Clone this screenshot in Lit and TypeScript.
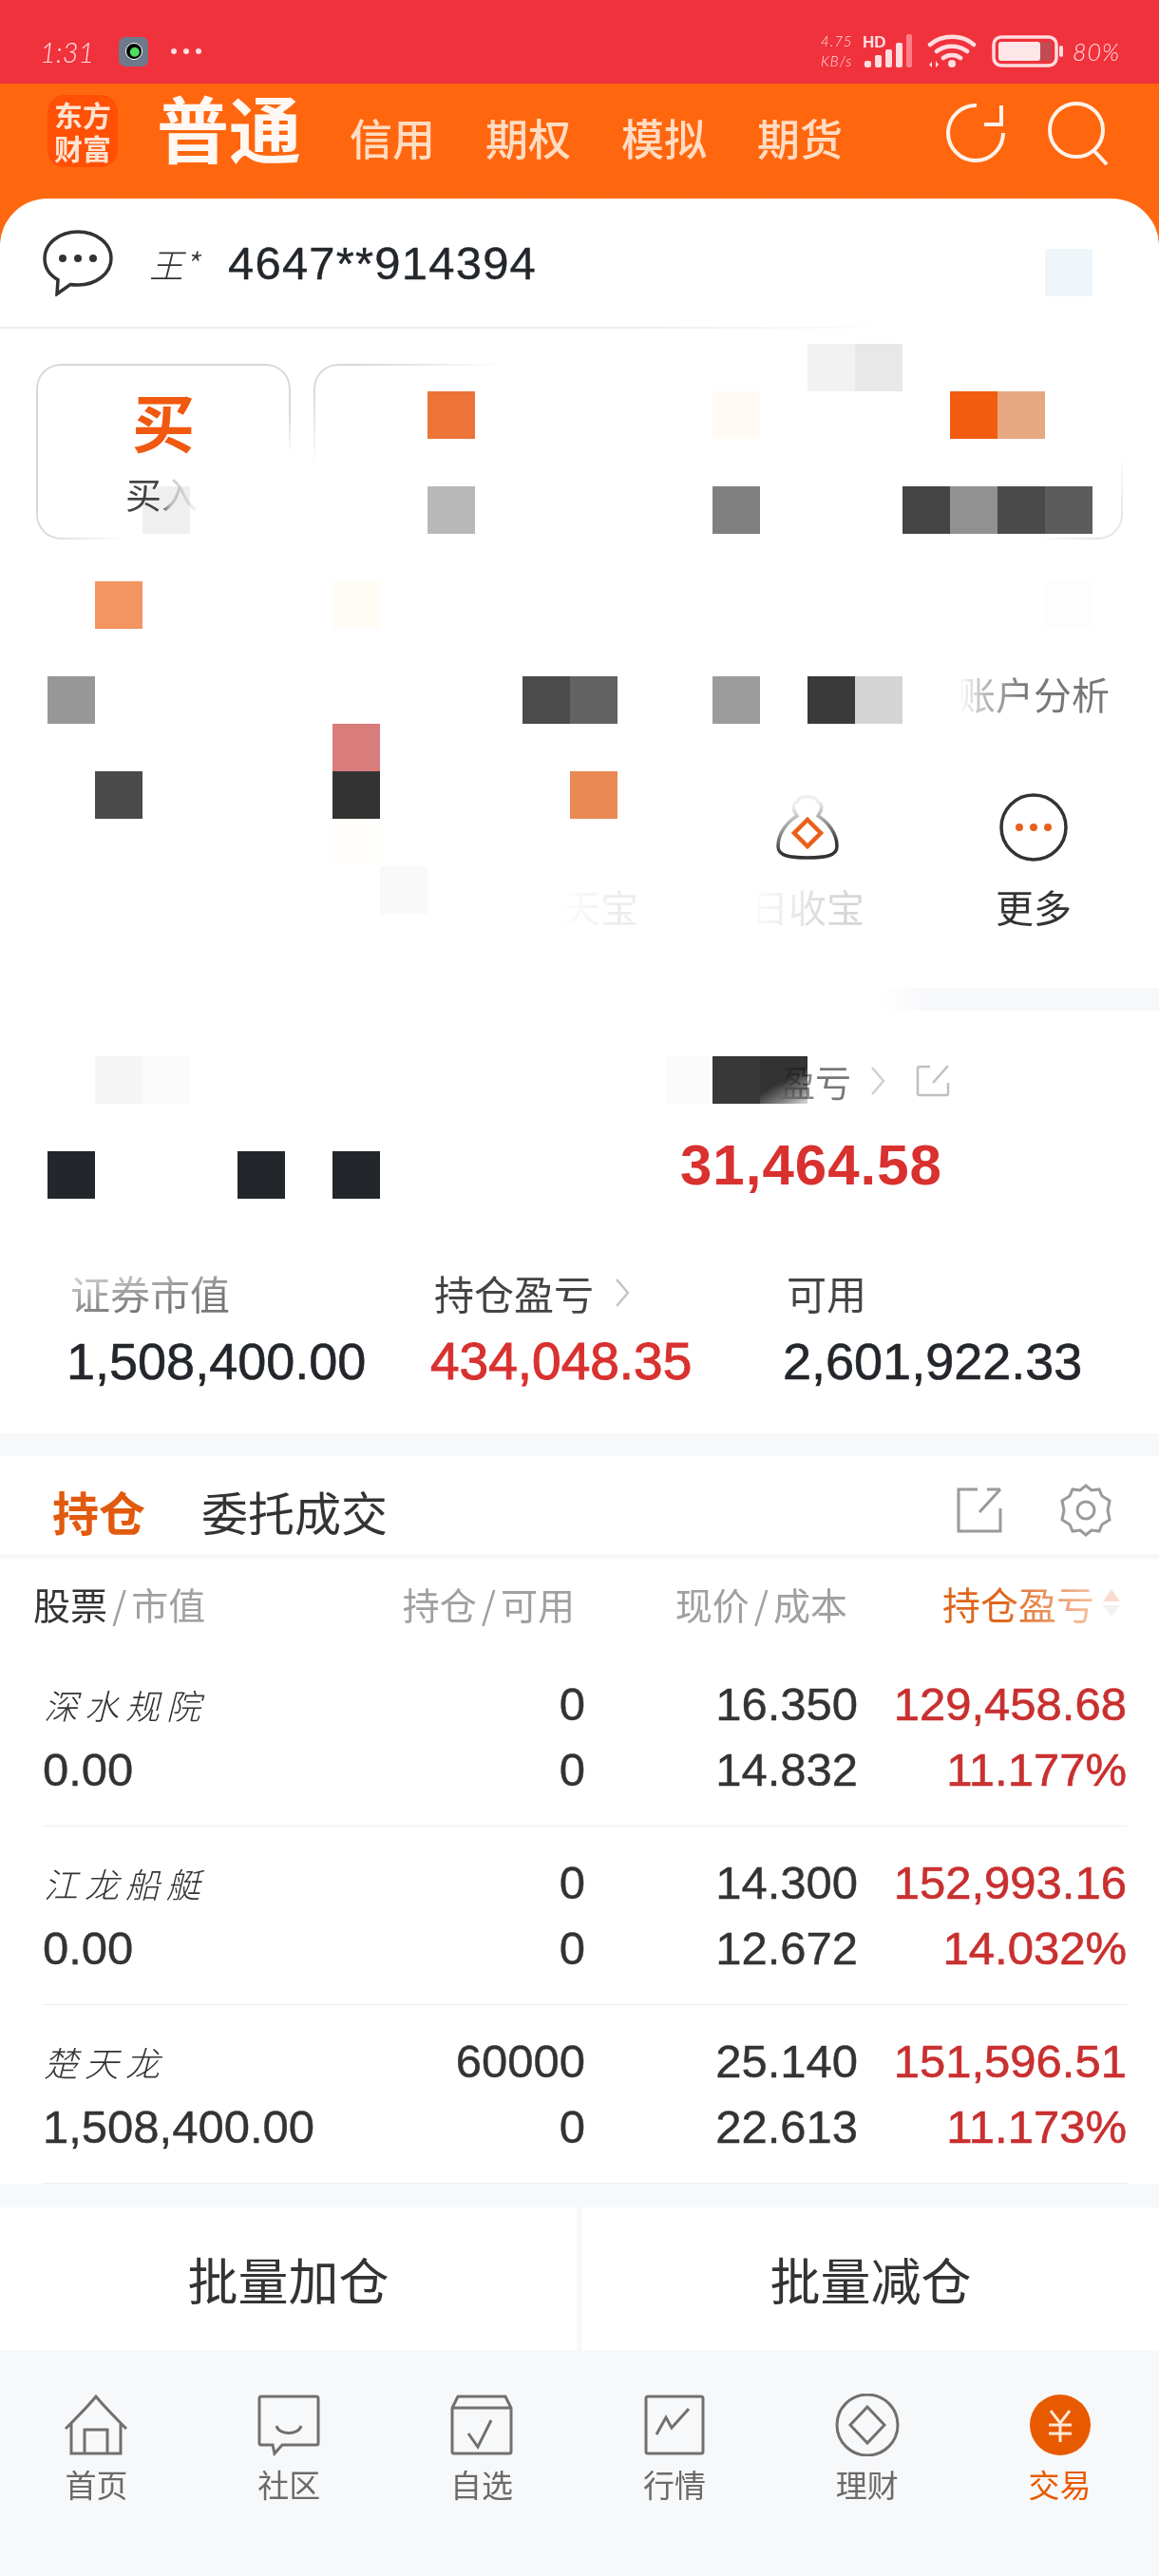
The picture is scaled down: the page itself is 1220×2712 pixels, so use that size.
import { LitElement, html, css, svg } from 'lit';
import { customElement } from 'lit/decorators.js';

// pixelated patches that sit over the page, x / y / colour on a 50px grid
const TILES: [number, number, string][] = [
  [1100, 262, '#eff6fa'],
  [850, 362, '#f2f2f2'], [900, 362, '#e8e8e8'],
  [450, 412, '#ec7438'], [750, 412, '#fffaf3'], [1000, 412, '#f25c10'], [1050, 412, '#e6a880'],
  [150, 512, '#efefef'], [450, 512, '#b8b8b8'], [750, 512, '#808080'],
  [950, 512, '#444444'], [1000, 512, '#919191'], [1050, 512, '#4a4a4a'], [1100, 512, '#5c5c5c'],
  [100, 612, '#f29560'], [350, 612, '#fffbf5'], [1100, 612, '#fdfdfd'],
  [50, 712, '#979797'], [550, 712, '#4b4b4b'], [600, 712, '#626262'],
  [750, 712, '#9c9c9c'], [850, 712, '#3a3a3a'], [900, 712, '#d4d4d4'],
  [350, 762, '#d87c7c'],
  [100, 812, '#4a4a4a'], [350, 812, '#333333'], [600, 812, '#e98a55'],
  [350, 862, '#fffefb'], [400, 912, '#f9f9f9'],
  [100, 1112, '#f5f5f5'], [150, 1112, '#fbfbfb'], [700, 1112, '#fbfbfb'], [750, 1112, '#383838'],
  [800, 1112, 'linear-gradient(150deg,#333 50%,#8a8a8a 80%,#ddd 100%)'],
  [50, 1212, '#23272b'], [250, 1212, '#23272b'], [350, 1212, '#23272b'],
];

const ROWS = [
  { name: '深水规院', value: '0.00', hold: '0', avail: '0', price: '16.350', cost: '14.832', pl: '129,458.68', pct: '11.177%' },
  { name: '江龙船艇', value: '0.00', hold: '0', avail: '0', price: '14.300', cost: '12.672', pl: '152,993.16', pct: '14.032%' },
  { name: '楚天龙', value: '1,508,400.00', hold: '60000', avail: '0', price: '25.140', cost: '22.613', pl: '151,596.51', pct: '11.173%' },
];

const NAV = [
  { label: '首页', icon: svg`<path d="M3 37C12 28 26 14 35 3c9 11 23 25 32 34M9 31v32h52V31M23 63V38h24v25"/>` },
  { label: '社区', icon: svg`<path d="M6 3h58a2 2 0 0 1 2 2v47a2 2 0 0 1-2 2H28l-8 9-2-9H6a2 2 0 0 1-2-2V5a2 2 0 0 1 2-2z"/><path d="M22 34c3 10 23 10 26 0"/>` },
  { label: '自选', icon: svg`<path d="M10 3h50l6 12v46a2 2 0 0 1-2 2H6a2 2 0 0 1-2-2V15zM4 15h62"/><path d="M21 42l10 14 14-28"/>` },
  { label: '行情', icon: svg`<path d="M7 3h56a2 2 0 0 1 2 2v56a2 2 0 0 1-2 2H7a2 2 0 0 1-2-2V5a2 2 0 0 1 2-2z"/><path d="M16 43l10-18 6 11 18-20"/>` },
  { label: '理财', icon: svg`<circle cx="35" cy="33" r="32"/><path d="M35 14l18 19-18 19-18-19z"/>` },
];

@customElement('app-root')
export class AppRoot extends LitElement {
  static styles = css`
    :host {
      display: block;
      position: relative;
      width: 1220px;
      height: 2712px;
      overflow: hidden;
      background: #f7f8fa;
      color: #333;
      font-family: 'Noto Sans CJK SC', 'Liberation Sans', sans-serif;
    }
    .num {
      font-family: 'Liberation Sans', sans-serif;
    }
    svg {
      display: block;
      fill: none;
    }

    .status {
      height: 88px;
      background: #f0323c;
      color: #ffdde0;
      display: flex;
      align-items: center;
      padding: 20px 45px 0;
      box-sizing: border-box;
    }
    .time {
      font: italic 300 29px Lato, sans-serif;
      margin-left: -3px;
      width: 83px;
    }
    .notify {
      width: 31px;
      height: 31px;
      border-radius: 7px;
      background: #6c7a8c;
      display: grid;
      place-items: center;
    }
    .notify i {
      width: 16px;
      height: 16px;
      border-radius: 50%;
      background: radial-gradient(circle at 55% 55%, #4fdc5c 35%, #000 45%);
      border: 1px solid #fff;
    }
    .dots {
      display: flex;
      gap: 7px;
      margin-left: 24px;
    }
    .dots i {
      width: 6px;
      height: 6px;
      border-radius: 50%;
      background: #ffdde0;
    }
    .status-right {
      margin-left: auto;
      display: flex;
      align-items: center;
    }
    .speed {
      font: italic 300 15px/21px Lato, sans-serif;
      letter-spacing: 1px;
      width: 44px;
    }
    .batt-text {
      font: italic 300 25px Lato, sans-serif;
      letter-spacing: 1px;
      margin-left: 9px;
      width: 46px;
    }

    .header {
      height: 121px;
      padding: 12px 0 0 50px;
      box-sizing: border-box;
      display: flex;
      align-items: flex-start;
    }
    .top {
      background: linear-gradient(#ff660e, #ff6f1a);
    }
    .logo {
      width: 74px;
      height: 76px;
      border-radius: 18px;
      background: #ff5005;
      color: #ffe3d2;
      font-size: 30px;
      font-weight: 700;
      line-height: 35px;
      text-align: center;
      display: flex;
      align-items: center;
      justify-content: center;
    }
    .title {
      font-size: 76px;
      font-weight: 700;
      line-height: 76px;
      color: #fff8f2;
      margin: -5px 0 0 41px;
      width: 203px;
    }
    .kinds {
      display: flex;
      gap: 53px;
      padding-top: 15px;
      font-size: 45px;
      line-height: 60px;
      font-weight: 500;
      color: #ffdcc2;
    }
    .head-icons {
      margin-left: auto;
      display: flex;
      gap: 41px;
      padding: 6px 53px 0 0;
      stroke: #fff3ea;
    }

    .card {
      background: #fff;
      border-radius: 50px 50px 0 0;
    }
    .account {
      height: 135px;
      padding-left: 45px;
      display: flex;
      align-items: center;
    }
    .owner {
      font-size: 36px;
      font-style: italic;
      font-weight: 300;
      margin-left: 38px;
      width: 83px;
    }
    .acc-no {
      font-size: 49px;
      color: #23272b;
      letter-spacing: 1.2px;
      -webkit-text-stroke: 0.4px currentColor;
    }
    .rule {
      height: 2px;
      background: linear-gradient(90deg, #eee 55%, #fff 78%);
    }
    .trades {
      display: grid;
      grid-template-columns: repeat(4, 268px);
      gap: 24px;
      padding: 37px 0 0 38px;
    }
    .trade {
      height: 185px;
      position: relative;
      text-align: center;
      box-sizing: border-box;
    }
    .trade::before {
      content: '';
      position: absolute;
      inset: 0;
      border: 2px solid #d8d8d8;
      border-radius: 26px;
    }
    .trade.a::before {
      mask-image: linear-gradient(153deg, #000 58%, transparent 72%);
    }
    .trade.b::before {
      mask-image: linear-gradient(152deg, #000 8%, transparent 33%);
    }
    .trade.c::before {
      display: none;
    }
    .trade.d::before {
      border-color: #e6e6e6;
      mask-image: linear-gradient(135deg, transparent 80%, #000 94%);
    }
    .buy {
      font-size: 66px;
      font-weight: 700;
      color: #f0590f;
      line-height: 70px;
      padding-top: 24px;
    }
    .buy-sub {
      font-size: 38px;
      line-height: 46px;
      width: 80px;
      margin: 19px 0 0 94px;
      text-align: left;
      background: linear-gradient(90deg, #444 45%, #ccc 60%, #eee 90%);
      -webkit-background-clip: text;
      background-clip: text;
      color: transparent;
    }

    .funcs {
      display: grid;
      grid-template-columns: repeat(5, 238px);
      grid-template-rows: 224px 205px;
      padding: 43px 0 0 17px;
    }
    .func {
      text-align: center;
    }
    .func svg {
      margin: 0 auto;
    }
    .func .slot {
      height: 72px;
    }
    .func .lab {
      font-size: 40px;
      line-height: 50px;
      margin-top: 22px;
      white-space: nowrap;
    }
    .lab.acct {
      background: linear-gradient(90deg, #fff 17%, #bbb 28%, #777 45%);
    }
    .lab.tian {
      background: linear-gradient(90deg, #fff 40%, #ececec 65%, #f0f0f0);
    }
    .lab.shou {
      background: linear-gradient(100deg, #fff 25%, #d8d8d8 60%, #cfcfcf);
    }
    .lab.acct,
    .lab.tian,
    .lab.shou {
      -webkit-background-clip: text;
      background-clip: text;
      color: transparent;
    }
    .lab.more {
      color: #333;
    }
    .band {
      height: 24px;
      background: linear-gradient(90deg, #fff 76%, #f7f8fa 80%);
    }

    .totals {
      height: 445px;
      background: #fff;
      box-sizing: border-box;
      padding-top: 48px;
    }
    .total-top {
      display: flex;
      justify-content: flex-end;
      padding-right: 220px;
      align-items: center;
      height: 52px;
      gap: 16px;
    }
    .day-label {
      font-size: 38px;
      line-height: 52px;
      background: linear-gradient(90deg, #fff 35%, #777 70%);
      -webkit-background-clip: text;
      background-clip: text;
      color: transparent;
      width: 126px;
      margin-right: 4px;
      text-align: right;
    }
    .total-top .share {
      margin-left: 16px;
    }
    .big {
      margin: 27px 0 0 716px;
      font-size: 60px;
      line-height: 72px;
      font-weight: 700;
      color: #d8312f;
      letter-spacing: 1px;
    }
    .stats {
      display: grid;
      grid-template-columns: 383px 371px 1fr;
      padding: 73px 0 0 70px;
    }
    .stat-label {
      font-size: 42px;
      line-height: 50px;
      color: #444;
      padding-left: 4px;
      display: flex;
      align-items: center;
      gap: 22px;
    }
    .stat-label.wash span {
      background: linear-gradient(170deg, #ddd 5%, #777 70%);
      -webkit-background-clip: text;
      background-clip: text;
      color: transparent;
    }
    .stat-value {
      font-size: 54px;
      line-height: 60px;
      color: #23272b;
      margin-top: 17px;
      -webkit-text-stroke: 0.6px currentColor;
    }
    .stat-value.red {
      color: #d8312f;
      font-size: 55px;
      -webkit-text-stroke: 1px currentColor;
    }

    .tabs {
      margin-top: 24px;
      height: 103px;
      box-sizing: border-box;
      background: #fff;
      display: flex;
      align-items: center;
      padding: 11px 48px 0 55px;
      font-size: 49px;
    }
    .tab-on {
      color: #e25a0e;
      font-weight: 700;
      width: 157px;
    }
    .tab-icons {
      margin-left: auto;
      display: flex;
      align-items: center;
      gap: 59px;
      stroke: #9a9a9a;
    }
    .table {
      background: #fff;
      border-top: 5px solid #f5f6f8;
    }
    .cols {
      display: grid;
      grid-template-columns: 300px 271px 287px 283px;
      padding: 0 34px 0 45px;
    }
    .thead {
      height: 94px;
      align-items: center;
      font-size: 39px;
      color: #a0a0a0;
      text-align: right;
    }
    .thead > div {
      padding-right: 11px;
      white-space: nowrap;
    }
    .thead .first {
      text-align: left;
      margin-left: -10px;
    }
    .thead b {
      font-weight: 400;
      color: #333;
    }
    .thead i {
      font-style: normal;
      margin: 0 5px;
    }
    .thead .sort {
      display: flex;
      justify-content: flex-end;
      align-items: center;
      gap: 8px;
      padding-right: 6px;
    }
    .sort span {
      font-size: 40px;
      background: linear-gradient(90deg, #e0661c 40%, #f3c3a5 100%);
      -webkit-background-clip: text;
      background-clip: text;
      color: transparent;
    }
    .row {
      height: 187px;
      border-bottom: 1px solid #eee;
      margin: 0 33px 0 45px;
      padding: 0;
      grid-template-rows: 69px 69px;
      align-content: center;
      font-size: 49px;
      line-height: 69px;
      text-align: right;
      color: #333;
      -webkit-text-stroke: 0.4px currentColor;
    }
    .row .name {
      font-size: 36px;
      font-style: italic;
      font-weight: 300;
      letter-spacing: 7px;
      text-align: left;
      font-family: 'Noto Sans CJK SC', sans-serif;
      padding-left: 1px;
      -webkit-text-stroke: 0;
    }
    .row .left {
      text-align: left;
    }
    .row .red {
      color: #c8302f;
      -webkit-text-stroke: 0.6px currentColor;
    }

    .actions {
      margin-top: 25px;
      height: 150px;
      display: grid;
      grid-template-columns: 607px 607px;
      gap: 6px;
    }
    .action {
      background: #fff;
      display: grid;
      place-items: center;
      font-size: 53px;
      color: #333;
    }
    .nav {
      display: grid;
      grid-template-columns: repeat(6, 1fr);
      padding: 46px 3px 0 0;
    }
    .nav-item {
      display: flex;
      flex-direction: column;
      align-items: center;
      font-size: 33px;
      line-height: 46px;
      color: #6a6a6a;
    }
    .nav-item svg {
      stroke: #707070;
      stroke-width: 3;
      margin-bottom: 6px;
    }
    .nav-item.on {
      color: #e85a00;
    }

    .tile {
      position: absolute;
      width: 50px;
      height: 50px;
      mix-blend-mode: multiply;
    }
  `;

  private statusRight() {
    return html`<div class="status-right">
      <div class="speed">4.75<br />KB/s</div>
      <svg width="56" height="36" viewBox="0 0 56 36" style="fill:#ffdde0">
        <text x="0" y="14" font-family="Liberation Sans" font-weight="700" font-size="17">HD</text>
        <rect x="2" y="28" width="7" height="7" rx="2" />
        <rect x="13" y="22" width="7" height="13" rx="2" />
        <rect x="24" y="16" width="7" height="19" rx="2" />
        <rect x="35" y="9" width="7" height="26" rx="2" />
        <rect x="46" y="0" width="6" height="35" rx="2" fill="#ff7f88" />
      </svg>
      <svg width="52" height="36" viewBox="0 0 52 36" style="margin-left:12px">
        <path d="M3 11C15 0 37 0 49 11M10 18c9-7 23-7 32 0M17 25c5-4 13-4 18 0" stroke="#ffdde0" stroke-width="4.5" stroke-linecap="round" />
        <circle cx="26" cy="31" r="4" fill="#ffdde0" />
        <path d="M5 35v-6l-3 3zM9 28v7l3-3z" fill="#ffdde0" />
      </svg>
      <svg width="76" height="34" viewBox="0 0 76 34" style="margin-left:16px">
        <rect x="2" y="2" width="66" height="30" rx="8" stroke="#ffdde0" stroke-width="3.5" />
        <rect x="7" y="7" width="44" height="20" rx="3" fill="#ffe6e8" />
        <rect x="51" y="7" width="12" height="20" fill="#c24a52" />
        <rect x="71" y="11" width="4" height="12" rx="2" fill="#ffdde0" />
      </svg>
      <div class="batt-text">80%</div>
    </div>`;
  }

  private bagIcon() {
    return html`<svg width="66" height="70" viewBox="0 0 66 70">
      <defs>
        <linearGradient id="bag" x1="0.3" y1="0" x2="0.5" y2="1">
          <stop offset="0.15" stop-color="#eee" />
          <stop offset="0.55" stop-color="#888" />
          <stop offset="0.85" stop-color="#333" />
        </linearGradient>
      </defs>
      <path d="M22 24c-4-6-6-12 0-15 3-7 19-7 22 0 6 3 4 9 0 15 10 6 20 18 20 32 0 10-12 12-31 12S2 66 2 56c0-14 10-26 20-32z" stroke="url(#bag)" stroke-width="3.5" />
      <path d="M33 28l14 14-14 14-14-14z" stroke="#e8601a" stroke-width="4.5" />
    </svg>`;
  }

  private moreIcon() {
    return html`<svg width="72" height="72" viewBox="0 0 72 72">
      <circle cx="36" cy="36" r="34" stroke="#333" stroke-width="3.5" />
      <circle cx="21" cy="36" r="4" fill="#e8601a" />
      <circle cx="36" cy="36" r="4" fill="#e8601a" />
      <circle cx="51" cy="36" r="4" fill="#e8601a" />
    </svg>`;
  }

  render() {
    return html`
      <div class="status">
        <div class="time">1:31</div>
        <div class="notify"><i></i></div>
        <div class="dots"><i></i><i></i><i></i></div>
        ${this.statusRight()}
      </div>

      <div class="top">
        <div class="header">
          <div class="logo">东方<br />财富</div>
          <div class="title">普通</div>
          <div class="kinds"><span>信用</span><span>期权</span><span>模拟</span><span>期货</span></div>
          <div class="head-icons">
            <svg width="66" height="68" viewBox="0 0 66 68" stroke-width="4">
              <path d="M34 5A29 29 0 1 0 62 34M60 5v20H42" />
            </svg>
            <svg width="66" height="68" viewBox="0 0 66 68" stroke-width="4">
              <circle cx="32" cy="31" r="28" />
              <path d="M50 52l14 15" />
            </svg>
          </div>
        </div>

        <div class="card">
          <div class="account">
            <svg width="74" height="70" viewBox="0 0 74 70" stroke="#333" stroke-width="3.5">
              <path d="M37 2C18 2 2 14 2 30c0 10 6 18 14 22.500l-1 15 14-10c2.500.5 5 .5 8 .5 19 0 35-12 35-28S56 2 37 2z" />
              <circle cx="21" cy="30" r="4" fill="#333" stroke="none" />
              <circle cx="37" cy="30" r="4" fill="#333" stroke="none" />
              <circle cx="53" cy="30" r="4" fill="#333" stroke="none" />
            </svg>
            <div class="owner">王*</div>
            <div class="acc-no num">4647**914394</div>
          </div>
          <div class="rule"></div>

          <div class="trades">
            <div class="trade a">
              <div class="buy">买</div>
              <div class="buy-sub">买入</div>
            </div>
            <div class="trade b"></div>
            <div class="trade c"></div>
            <div class="trade d"></div>
          </div>

          <div class="funcs">
            <div></div><div></div><div></div><div></div>
            <div class="func"><div class="slot"></div><div class="lab acct">账户分析</div></div>
            <div></div><div></div>
            <div class="func"><div class="slot"></div><div class="lab tian">天天宝</div></div>
            <div class="func"><div class="slot">${this.bagIcon()}</div><div class="lab shou">日收宝</div></div>
            <div class="func"><div class="slot">${this.moreIcon()}</div><div class="lab more">更多</div></div>
          </div>
        </div>
      </div>
      <div class="band"></div>

      <div class="totals">
        <div class="total-top">
          <div class="day-label">盈亏</div>
          <svg width="16" height="32" viewBox="0 0 16 32" stroke="#d0d0d0" stroke-width="2.500"><path d="M2 2l12 14L2 30" /></svg>
          <svg class="share" width="36" height="36" viewBox="0 0 36 36" stroke="#c0c0c0" stroke-width="2.500">
            <path d="M15 3H4a2 2 0 0 0-2 2v26a2 2 0 0 0 2 2h28a2 2 0 0 0 2-2V20M18 20L34 2" />
          </svg>
        </div>
        <div class="big num">31,464.58</div>
        <div class="stats">
          <div class="stat-label wash"><span>证券市值</span></div>
          <div class="stat-label">
            持仓盈亏
            <svg width="16" height="32" viewBox="0 0 16 32" stroke="#c4c4c4" stroke-width="2.500"><path d="M2 2l12 14L2 30" /></svg>
          </div>
          <div class="stat-label">可用</div>
          <div class="stat-value num">1,508,400.00</div>
          <div class="stat-value num red">434,048.35</div>
          <div class="stat-value num">2,601,922.33</div>
        </div>
      </div>

      <div class="tabs">
        <div class="tab-on">持仓</div>
        <div>委托成交</div>
        <div class="tab-icons">
          <svg width="48" height="48" viewBox="0 0 48 48" stroke-width="3">
            <path d="M22 2H2v44h44V22M24 26L46 2M32 2h14" />
          </svg>
          <svg width="58" height="56" viewBox="0 0 58 56" stroke-width="3">
            <path d="M29 2l6 5 8-1 3 7 8 5-2 10 2 10-8 5-3 7-8-1-6 5-6-5-8 1-3-7-8-5 2-10-2-10 8-5 3-7 8 1z" />
            <circle cx="29" cy="28" r="9" />
          </svg>
        </div>
      </div>

      <div class="table">
        <div class="cols thead">
          <div class="first"><b>股票</b><i>/</i>市值</div>
          <div>持仓<i>/</i>可用</div>
          <div>现价<i>/</i>成本</div>
          <div class="sort">
            <span>持仓盈亏</span>
            <svg width="20" height="34" viewBox="0 0 20 34">
              <path d="M10 2l9 13H1z" fill="#fbdcd0" />
              <path d="M10 32l9-13H1z" fill="#f2f2f2" />
            </svg>
          </div>
        </div>
        ${ROWS.map(
          (r) => html`<div class="cols row num">
            <div class="name">${r.name}</div>
            <div>${r.hold}</div>
            <div>${r.price}</div>
            <div class="red">${r.pl}</div>
            <div class="left">${r.value}</div>
            <div>${r.avail}</div>
            <div>${r.cost}</div>
            <div class="red">${r.pct}</div>
          </div>`
        )}
      </div>

      <div class="actions">
        <div class="action">批量加仓</div>
        <div class="action">批量减仓</div>
      </div>

      <div class="nav">
        ${NAV.map(
          (n) => html`<div class="nav-item">
            <svg width="70" height="66" viewBox="0 0 70 66">${n.icon}</svg>
            ${n.label}
          </div>`
        )}
        <div class="nav-item on">
          <svg width="70" height="66" viewBox="0 0 70 66" style="stroke:none">
            <circle cx="35" cy="33" r="32" fill="#e85a00" />
            <path d="M25 18l10 13 10-13M23 33h24M23 42h24M35 31v20" stroke="#ffe8d8" stroke-width="3" />
          </svg>
          交易
        </div>
      </div>

      ${TILES.map(
        ([x, y, c]) => html`<div class="tile" style="left:${x}px;top:${y}px;background:${c}"></div>`
      )}
    `;
  }
}
